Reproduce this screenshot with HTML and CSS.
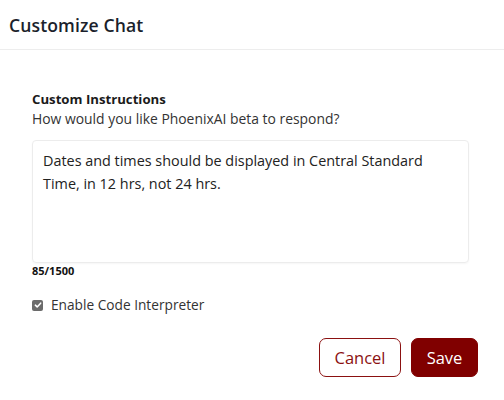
FILE: index.html
```html
<!DOCTYPE html>
<html>
<head>
<meta charset="utf-8">
<link rel="stylesheet" href="styles.css">
</head>
<body>
<div class="modal">
  <header class="modal-header">
    <h1 class="title">Customize Chat</h1>
  </header>
  <section class="modal-body">
    <div class="label">Custom Instructions</div>
    <div class="hint">How would you like PhoenixAI beta to respond?</div>
    <div class="textarea">Dates and times should be displayed in Central Standard Time, in 12 hrs, not 24 hrs.</div>
    <div class="counter">85/1500</div>
    <label class="check-row">
      <span class="checkbox">
        <svg viewBox="0 0 12 12" width="12" height="12"><path d="M2.8 6.2 L5 8.3 L9.2 3.8" fill="none" stroke="#fff" stroke-width="1.8" stroke-linecap="round" stroke-linejoin="round"/></svg>
      </span>
      <span class="check-label">Enable Code Interpreter</span>
    </label>
    <div class="actions">
      <button class="btn btn-outline">Cancel</button>
      <button class="btn btn-primary">Save</button>
    </div>
  </section>
</div>
</body>
</html>
```
FILE: styles.css
```css
* { box-sizing: border-box; }
body {
  margin: 0;
  background: #fff;
  font-family: "Open Sans", "Liberation Sans", sans-serif;
  color: #1f2330;
}
.modal-header {
  height: 50px;
  border-bottom: 1px solid #ededed;
  padding: 0 9px;
  display: flex;
  align-items: center;
}
.title {
  margin: 0;
  font-size: 17.6px;
  font-weight: 600;
  color: #1b1f2c;
  letter-spacing: 0.1px;
}
.modal-body {
  padding: 40px 35px 0 32px;
  display: flex;
  flex-direction: column;
}
.label {
  font-size: 13.2px;
  font-weight: 700;
  line-height: 18px;
  color: #1b1b1b;
}
.hint {
  font-size: 13.9px;
  line-height: 20px;
  color: #333;
  margin-top: 1px;
}
.textarea {
  margin-top: 11px;
  height: 123px;
  border: 1px solid #ececec;
  border-radius: 4px;
  box-shadow: 0 1px 2px rgba(0,0,0,0.04);
  padding: 8px 10px;
  font-size: 14.4px;
  line-height: 23px;
  color: #222;
}
.counter {
  font-size: 11px;
  font-weight: 700;
  line-height: 16px;
  color: #111;
}
.check-row {
  display: flex;
  align-items: center;
  gap: 8px;
  margin-top: 17px;
}
.checkbox {
  width: 11px;
  height: 11px;
  border-radius: 2px;
  background: #6b6b6b;
  display: flex;
  align-items: center;
  justify-content: center;
}
.checkbox svg { width: 10px; height: 10px; }
.check-label {
  font-size: 13.7px;
  color: #333;
  line-height: 18px;
}
.actions {
  display: flex;
  justify-content: flex-end;
  gap: 10px;
  margin-top: 24px;
  margin-right: -9px;
}
.btn {
  height: 39px;
  border-radius: 7px;
  font-family: inherit;
  font-size: 16.5px;
  padding: 0;
  cursor: pointer;
}
.btn-outline {
  background: #fff;
  border: 1.5px solid #8b1111;
  color: #8b1111;
  width: 82px;
}
.btn-primary {
  background: #800000;
  border: 1.5px solid #800000;
  color: #fff;
  width: 67px;
}
```
